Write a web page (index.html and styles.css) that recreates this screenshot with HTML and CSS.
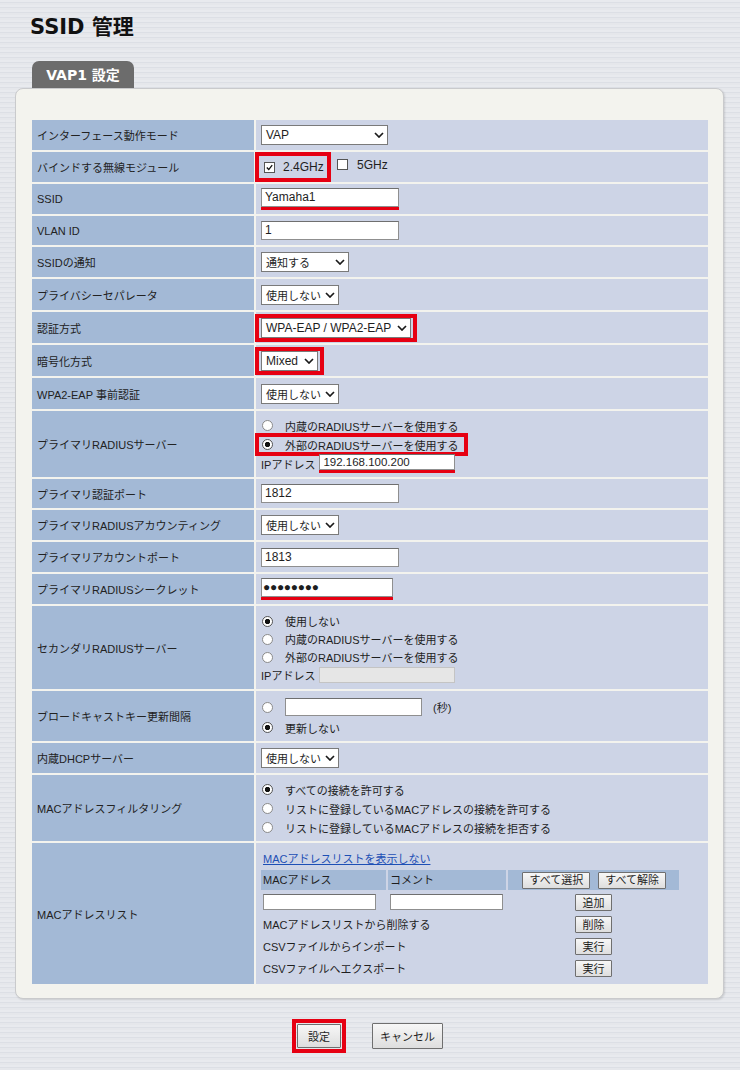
FILE: index.html
```html
<!DOCTYPE html>
<html lang="ja">
<head>
    <meta charset="UTF-8">
    <title>SSID 管理</title>
    <link rel="stylesheet" href="styles.css">
</head>
<body>
    <h1 class="page-title">SSID 管理</h1>

    <div class="tab">VAP1 設定</div>

    <div class="panel">
        <table class="settings">
            <tr>
                <th>インターフェース動作モード</th>
                <td><span class="select latin w-vap">VAP<svg class="chev" viewBox="0 0 10 6"><polyline points="1,1 5,5 9,1"/></svg></span></td>
            </tr>
            <tr class="short">
                <th>バインドする無線モジュール</th>
                <td class="tight band">
                    <span class="mark mark-full"><span class="check on"><svg viewBox="0 0 11 11"><path d="M2.2 5.6 L4.6 8 L8.8 2.6"/></svg></span>2.4GHz</span>
                    <span class="opt"><span class="check"></span>5GHz</span>
                </td>
            </tr>
            <tr>
                <th>SSID</th>
                <td><span class="underlined"><span class="text-input">Yamaha1</span></span></td>
            </tr>
            <tr class="short">
                <th>VLAN ID</th>
                <td><span class="text-input">1</span></td>
            </tr>
            <tr>
                <th>SSIDの通知</th>
                <td><span class="select w-notify">通知する<svg class="chev" viewBox="0 0 10 6"><polyline points="1,1 5,5 9,1"/></svg></span></td>
            </tr>
            <tr class="tall">
                <th>プライバシーセパレータ</th>
                <td><span class="select">使用しない<svg class="chev" viewBox="0 0 10 6"><polyline points="1,1 5,5 9,1"/></svg></span></td>
            </tr>
            <tr class="tall">
                <th>認証方式</th>
                <td class="tight"><span class="mark"><span class="select latin">WPA-EAP / WPA2-EAP<svg class="chev" viewBox="0 0 10 6"><polyline points="1,1 5,5 9,1"/></svg></span></span></td>
            </tr>
            <tr class="tall">
                <th>暗号化方式</th>
                <td class="tight"><span class="mark"><span class="select latin">Mixed<svg class="chev" viewBox="0 0 10 6"><polyline points="1,1 5,5 9,1"/></svg></span></span></td>
            </tr>
            <tr class="tall">
                <th>WPA2-EAP 事前認証</th>
                <td><span class="select">使用しない<svg class="chev" viewBox="0 0 10 6"><polyline points="1,1 5,5 9,1"/></svg></span></td>
            </tr>
            <tr>
                <th>プライマリRADIUSサーバー</th>
                <td class="lines">
                    <div class="line"><span class="radio"></span>内蔵のRADIUSサーバーを使用する</div>
                    <div class="line"><span class="mark mark-line"><span class="radio on"></span>外部のRADIUSサーバーを使用する</span></div>
                    <div class="line">IPアドレス<span class="underlined ip-wrap"><span class="text-input ip">192.168.100.200</span></span></div>
                </td>
            </tr>
            <tr class="short">
                <th>プライマリ認証ポート</th>
                <td><span class="text-input">1812</span></td>
            </tr>
            <tr>
                <th>プライマリRADIUSアカウンティング</th>
                <td><span class="select">使用しない<svg class="chev" viewBox="0 0 10 6"><polyline points="1,1 5,5 9,1"/></svg></span></td>
            </tr>
            <tr>
                <th>プライマリアカウントポート</th>
                <td><span class="text-input">1813</span></td>
            </tr>
            <tr>
                <th>プライマリRADIUSシークレット</th>
                <td><span class="underlined"><span class="text-input secret">●●●●●●●●</span></span></td>
            </tr>
            <tr>
                <th>セカンダリRADIUSサーバー</th>
                <td class="lines compact">
                    <div class="line"><span class="radio on"></span>使用しない</div>
                    <div class="line"><span class="radio"></span>内蔵のRADIUSサーバーを使用する</div>
                    <div class="line"><span class="radio"></span>外部のRADIUSサーバーを使用する</div>
                    <div class="line">IPアドレス<span class="text-input ip disabled"></span></div>
                </td>
            </tr>
            <tr>
                <th>ブロードキャストキー更新間隔</th>
                <td class="lines">
                    <div class="line line-input"><span class="radio"></span><span class="text-input interval"></span><span class="unit">(秒)</span></div>
                    <div class="line"><span class="radio on"></span>更新しない</div>
                </td>
            </tr>
            <tr>
                <th>内蔵DHCPサーバー</th>
                <td><span class="select">使用しない<svg class="chev" viewBox="0 0 10 6"><polyline points="1,1 5,5 9,1"/></svg></span></td>
            </tr>
            <tr>
                <th>MACアドレスフィルタリング</th>
                <td class="lines">
                    <div class="line"><span class="radio on"></span>すべての接続を許可する</div>
                    <div class="line"><span class="radio"></span>リストに登録しているMACアドレスの接続を許可する</div>
                    <div class="line"><span class="radio"></span>リストに登録しているMACアドレスの接続を拒否する</div>
                </td>
            </tr>
            <tr>
                <th>MACアドレスリスト</th>
                <td class="lines mac-list">
                    <a class="link" href="#">MACアドレスリストを表示しない</a>
                    <div class="mac-grid">
                        <div class="mac-head">MACアドレス</div>
                        <div class="mac-head">コメント</div>
                        <div class="mac-head mac-btns"><span class="btn">すべて選択</span><span class="btn">すべて解除</span></div>

                        <div class="mac-cell"><span class="text-input mac"></span></div>
                        <div class="mac-cell"><span class="text-input mac"></span></div>
                        <div class="mac-cell center"><span class="btn">追加</span></div>

                        <div class="mac-cell span2">MACアドレスリストから削除する</div>
                        <div class="mac-cell center"><span class="btn">削除</span></div>

                        <div class="mac-cell span2">CSVファイルからインポート</div>
                        <div class="mac-cell center"><span class="btn">実行</span></div>

                        <div class="mac-cell span2">CSVファイルへエクスポート</div>
                        <div class="mac-cell center"><span class="btn">実行</span></div>
                    </div>
                </td>
            </tr>
        </table>
    </div>

    <div class="actions">
        <span class="mark"><span class="btn big">設定</span></span>
        <span class="btn big cancel">キャンセル</span>
    </div>
</body>
</html>
```

FILE: styles.css
```css
body {
    margin: 0;
    width: 740px;
    min-height: 1070px;
    font-family: "Liberation Sans", "Noto Sans CJK JP", sans-serif;
    font-size: 11px;
    color: #1e1e1e;
    background-color: #e4e6eb;
    background-image: repeating-linear-gradient(to bottom, #e8eaee 0, #e8eaee 2px, #dcdfe5 2px, #dcdfe5 3px, #e5e7eb 3px, #e5e7eb 5px);
}
.page-title {
    margin: 0;
    padding: 13px 0 0 30px;
    font-family: "DejaVu Sans", "Noto Sans CJK JP", sans-serif;
    font-size: 21px;
    line-height: 28px;
    font-weight: bold;
    color: #111;
}
.tab {
    margin: 20px 0 0 32px;
    width: 102px;
    height: 27px;
    box-sizing: border-box;
    padding-top: 5px;
    text-align: center;
    background-color: #6c6c6c;
    border-radius: 7px 7px 0 0;
    color: #fff;
    font-family: "DejaVu Sans", "Noto Sans CJK JP", sans-serif;
    font-size: 14px;
    font-weight: bold;
    line-height: 18px;
}
.panel {
    margin: 0 16px 0 15px;
    padding: 29px 13px 12px 14px;
    background-color: #f3f3ee;
    border: 1px solid #c9cacc;
    border-radius: 8px;
    box-shadow: 1px 1px 2px rgba(0,0,0,0.12);
}
.settings {
    border-collapse: separate;
    border-spacing: 2px;
    width: 680px;
}
.settings th {
    width: 212px;
    padding: 0 5px;
    height: 30px;
    text-align: left;
    font-weight: normal;
    background-color: #a3b9d6;
    color: #222;
}
.settings td {
    width: 442px;
    padding: 0 5px;
    height: 30px;
    background-color: #cdd4e6;
}
.settings tr.short th,
.settings tr.short td {
    height: 29px;
}
.settings tr.tall th,
.settings tr.tall td {
    height: 31px;
}
.settings td.tight {
    padding-top: 0;
    padding-bottom: 0;
}
.settings td.lines {
    padding-top: 5px;
    padding-bottom: 4px;
}
.settings td.compact {
    padding-top: 6px;
    padding-bottom: 5px;
}
.settings td.mac-list {
    padding-top: 7px;
    padding-bottom: 5px;
}
.band { font-size: 12px; }
.line {
    display: flex;
    align-items: center;
    height: 19px;
    white-space: nowrap;
}
.compact .line { height: 18px; }
.line.line-input { height: 22px; }

/* form controls */
.select {
    display: inline-flex;
    align-items: center;
    justify-content: space-between;
    height: 20px;
    box-sizing: border-box;
    padding: 0 3px 0 4px;
    background: #fff;
    border: 1px solid #7a7a7a;
    font-size: 11px;
    gap: 4px;
    vertical-align: middle;
}
.select.latin { font-size: 12px; gap: 6px; }
.select.w-vap { width: 127px; }
.select.w-notify { width: 88px; }
.chev {
    width: 10px;
    height: 6px;
    fill: none;
    stroke: #1a1a1a;
    stroke-width: 1.7;
}
.text-input {
    display: inline-flex;
    align-items: center;
    width: 138px;
    height: 19px;
    box-sizing: border-box;
    padding: 0 3px;
    line-height: 17px;
    font-size: 12px;
    white-space: nowrap;
    overflow: hidden;
    background: #fff;
    border: 1px solid #8f8f8f;
    border-top-color: #6f6f6f;
    vertical-align: middle;
}
.text-input.ip { width: 136px; height: 16px; line-height: 14px; margin-left: 4px; font-size: 11.5px; }
.ip-wrap .text-input.ip { margin-left: 0; }
.ip-wrap { margin-left: 4px; }
.text-input.secret { width: 132px; font-size: 12px; letter-spacing: -0.3px; padding-left: 1px; }
.text-input.disabled { background: #e6e6e6; border-color: #c4c4c4; }
.text-input.interval { width: 137px; height: 18px; margin-left: 0; }
.text-input.mac { width: 113px; height: 16px; }
.underlined {
    display: inline-flex;
    border-bottom: 3px solid #e60012;
    vertical-align: middle;
}
.unit { margin-left: 11px; }

.check, .radio {
    display: inline-block;
    width: 11px;
    height: 11px;
    box-sizing: border-box;
    background: #fff;
    margin-right: 12px;
    flex: none;
    vertical-align: middle;
}
.check {
    border: 1px solid #555;
}
.check svg {
    display: block;
    width: 9px;
    height: 9px;
    fill: none;
    stroke: #111;
    stroke-width: 1.6;
}
.band .check { margin-right: 8px; }
.band .opt .check { margin-right: 9px; }
.radio {
    margin-left: 1px;
    border: 1px solid #8a8a8a;
    border-radius: 50%;
}
.radio.on {
    background: radial-gradient(circle, #111 0, #111 2.3px, #fff 3px);
    border-color: #555;
}
.opt {
    display: inline-flex;
    align-items: center;
    margin-left: 3px;
}

/* red highlight frames */
.mark {
    display: inline-flex;
    align-items: center;
    border: 4px solid #e60012;
    padding: 0 2px;
    margin-left: -6px;
    vertical-align: middle;
}
.mark.mark-full {
    height: 30px;
    box-sizing: border-box;
    padding: 0 3px 0 5px;
}
.mark.mark-line {
    height: 23px;
    box-sizing: border-box;
    padding: 0 6px 0 2px;
}

/* mac list */
.link {
    display: block;
    height: 20px;
    line-height: 18px;
    margin-left: 2px;
    color: #1d4fb5;
    text-decoration: underline;
}
.mac-grid {
    display: grid;
    grid-template-columns: 125px 118px 171px;
    column-gap: 2px;
    width: 418px;
}
.mac-head {
    height: 20px;
    line-height: 20px;
    padding-left: 2px;
    margin-bottom: 1px;
    background-color: #a3b9d6;
}
.mac-btns {
    display: flex;
    align-items: center;
    justify-content: flex-end;
    gap: 8px;
    padding-right: 13px;
}
.mac-cell {
    height: 22px;
    display: flex;
    align-items: center;
    padding-left: 2px;
}
.mac-cell.span2 { grid-column: span 2; }
.mac-cell.center { justify-content: center; padding-left: 0; }

.btn {
    display: inline-flex;
    align-items: center;
    justify-content: center;
    height: 17px;
    box-sizing: border-box;
    padding: 0 6px;
    font-size: 11px;
    background: linear-gradient(#f7f7f7, #dedede);
    border: 1px solid #6f6f6f;
    border-radius: 1px;
}
.mac-cell .btn { width: 37px; }

/* bottom buttons */
.actions {
    display: flex;
    justify-content: center;
    align-items: center;
    gap: 26px;
    margin-top: 20px;
    padding-right: 5px;
}
.actions .mark {
    margin-left: 0;
    padding: 1px;
}
.btn.big {
    height: 24px;
    width: 44px;
}
.btn.cancel {
    width: 71px;
    height: 26px;
}
```
